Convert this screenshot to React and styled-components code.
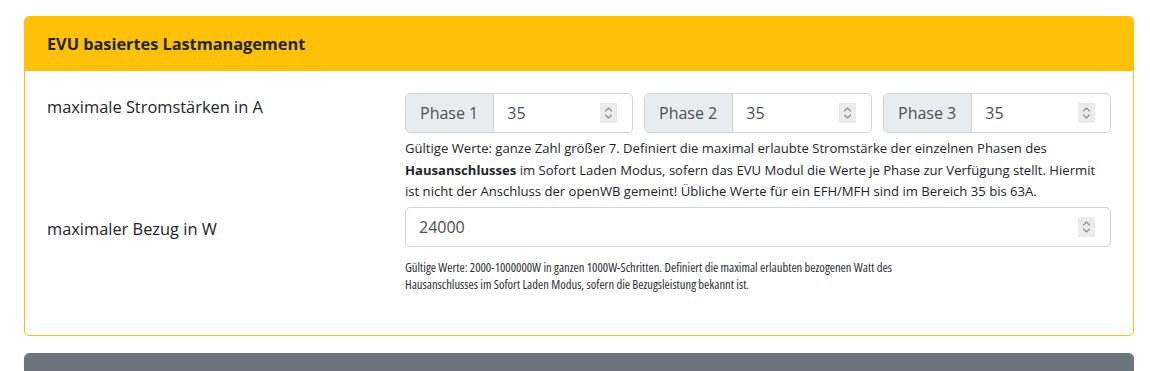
import React from 'react'
import styled, { createGlobalStyle } from 'styled-components'

const Global = createGlobalStyle`
  body {
    margin: 0;
    background: #fff;
    font-family: "Open Sans", "Noto Sans", sans-serif;
    color: #212529;
  }
`

const Page = styled.div`
  padding: 16px 16px 0 24px;
  display: flex;
  flex-direction: column;
  gap: 17px;
  width: 1110px;
`

const Card = styled.div`
  border: 1px solid ${p => p.$border};
  border-radius: 5px;
  overflow: hidden;
  background: #fff;
`

const CardHeader = styled.div`
  background: ${p => p.$bg};
  border-bottom: 1px solid ${p => p.$border || 'transparent'};
  padding: 0 22px;
  height: ${p => p.$h || 53}px;
  display: flex;
  align-items: center;
  font-weight: 700;
  font-size: 16.3px;
  color: #212529;
`

const CardBody = styled.div`
  padding: 22px 22px 42px 22px;
  display: flex;
  flex-direction: column;
`

const FormRow = styled.div`
  display: grid;
  grid-template-columns: 358px 1fr;
  margin-bottom: ${p => p.$mb || 0}px;
`

const Label = styled.label`
  font-size: 16.4px;
  padding-top: ${p => p.$pt || 2}px;
  line-height: 1.5;
`

const Phases = styled.div`
  display: grid;
  grid-template-columns: repeat(3, 1fr);
  gap: 11px;
`

const Group = styled.div`
  display: flex;
  height: 40px;
  border: 1px solid #ced4da;
  border-radius: 5px;
  overflow: hidden;
  box-sizing: border-box;
`

const Prepend = styled.span`
  background: #e9ecef;
  border-right: 1px solid #ced4da;
  padding: 0 15px 0 14px;
  display: flex;
  align-items: center;
  font-size: 16px;
  color: #495057;
  white-space: nowrap;
`

const Field = styled.input`
  flex: 1;
  min-width: 0;
  border: 0;
  outline: none;
  padding: 0 13px;
  font-family: inherit;
  font-size: 16px;
  color: #495057;
  background: transparent;
`

const Spinner = styled.span`
  align-self: center;
  width: 17px;
  height: 20px;
  margin-right: 15px;
  background: #ececf0;
  display: flex;
  align-items: center;
  justify-content: center;
`

const Help = styled.small`
  display: block;
  margin-top: 5px;
  font-size: 13.1px;
  line-height: 21.5px;
  color: #212529;
  b { font-weight: 700; }
`

const HelpNarrow = styled(Help)`
  font-stretch: condensed;
  font-size: 12.6px;
  line-height: 17px;
  margin-top: 12px;
  max-width: 510px;
  color: #2b2f33;
`

const Chevrons = () => (
  <svg width="9" height="14" viewBox="0 0 9 14" fill="none" stroke="#8a8a90" strokeWidth="1.1" strokeLinecap="round" strokeLinejoin="round">
    <path d="M1.5 5 L4.5 2 L7.5 5" />
    <path d="M1.5 9 L4.5 12 L7.5 9" />
  </svg>
)

const NumberInput = ({ prefix, value }) => (
  <Group>
    {prefix && <Prepend>{prefix}</Prepend>}
    <Field type="text" defaultValue={value} />
    <Spinner><Chevrons /></Spinner>
  </Group>
)

export default function App() {
  return (
    <>
      <Global />
      <Page>
        <Card $border="#ffc107">
          <CardHeader $bg="#ffc107" $border="#ffc107">EVU basiertes Lastmanagement</CardHeader>
          <CardBody>
            <FormRow $mb={4}>
              <Label>maximale Stromstärken in A</Label>
              <div>
                <Phases>
                  <NumberInput prefix="Phase 1" value="35" />
                  <NumberInput prefix="Phase 2" value="35" />
                  <NumberInput prefix="Phase 3" value="35" />
                </Phases>
                <Help>
                  Gültige Werte: ganze Zahl größer 7. Definiert die maximal erlaubte Stromstärke der einzelnen Phasen des{' '}
                  <b>Hausanschlusses</b> im Sofort Laden Modus, sofern das EVU Modul die Werte je Phase zur Verfügung stellt. Hiermit
                  ist nicht der Anschluss der openWB gemeint! Übliche Werte für ein EFH/MFH sind im Bereich 35 bis 63A.
                </Help>
              </div>
            </FormRow>
            <FormRow>
              <Label $pt={10}>maximaler Bezug in W</Label>
              <div>
                <NumberInput value="24000" />
                <HelpNarrow>
                  Gültige Werte: 2000-1000000W in ganzen 1000W-Schritten. Definiert die maximal erlaubten bezogenen Watt des
                  Hausanschlusses im Sofort Laden Modus, sofern die Bezugsleistung bekannt ist.
                </HelpNarrow>
              </div>
            </FormRow>
          </CardBody>
        </Card>
        <Card $border="#6c757d">
          <CardHeader $bg="#6c757d" $h={60} />
        </Card>
      </Page>
    </>
  )
}
